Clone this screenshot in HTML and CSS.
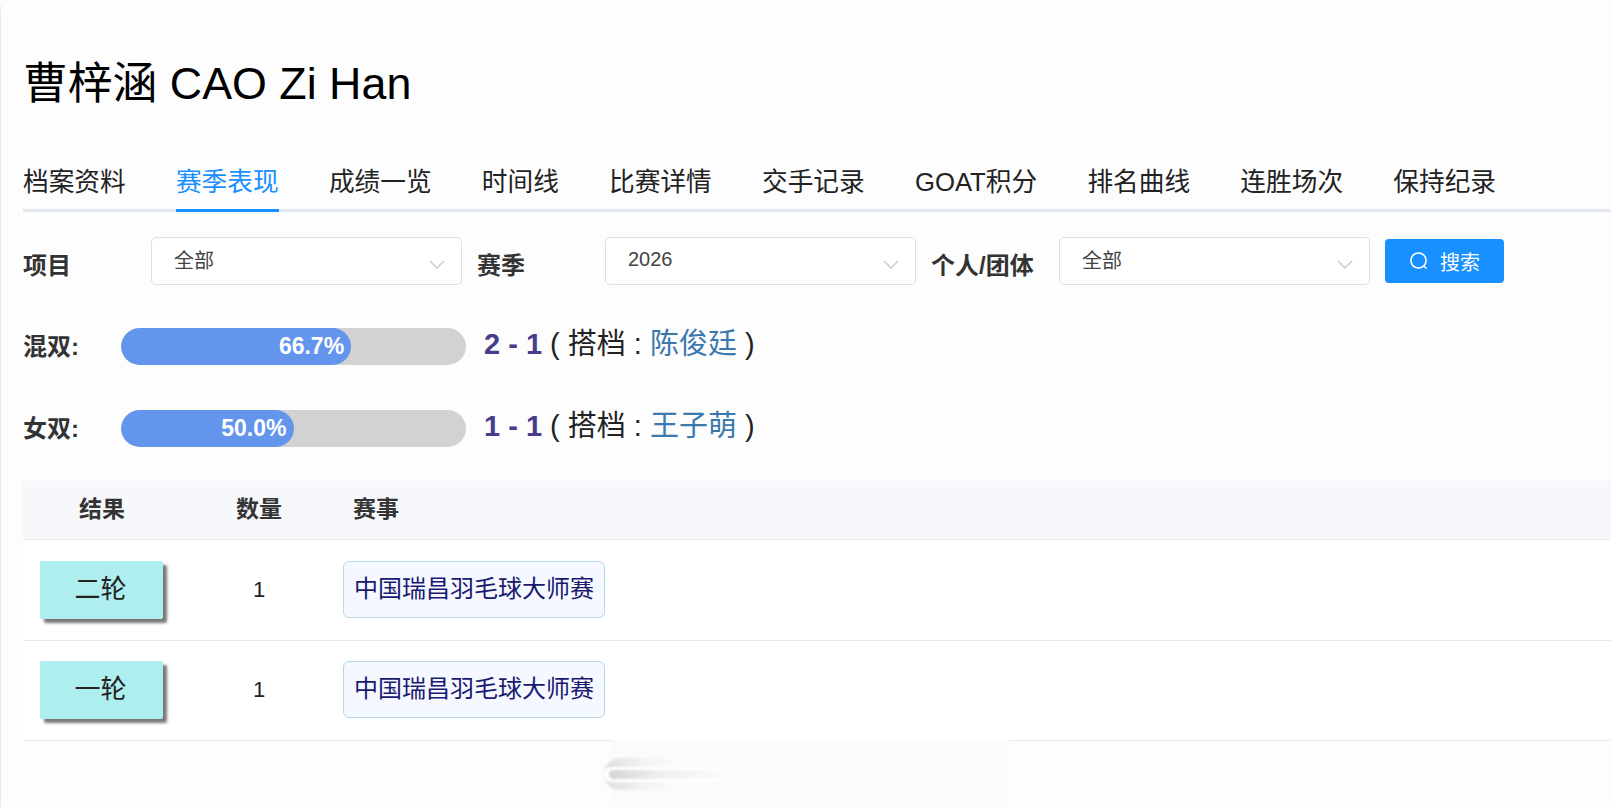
FILE: index.html
```html
<!DOCTYPE html>
<html lang="zh-CN">
<head>
<meta charset="utf-8">
<title>曹梓涵 CAO Zi Han</title>
<link rel="stylesheet" href="styles.css">
</head>
<body>
<main class="page">
  <h1 class="title">曹梓涵 CAO Zi Han</h1>
  <nav class="tabs">
    <a class="tab">档案资料</a>
    <a class="tab active">赛季表现</a>
    <a class="tab">成绩一览</a>
    <a class="tab">时间线</a>
    <a class="tab">比赛详情</a>
    <a class="tab">交手记录</a>
    <a class="tab">GOAT积分</a>
    <a class="tab">排名曲线</a>
    <a class="tab">连胜场次</a>
    <a class="tab">保持纪录</a>
  </nav>
  <form class="filters">
    <label class="filter-label">项目</label>
    <div class="select"><span>全部</span><svg class="chev" viewBox="0 0 16 9"><path d="M1 1l7 7 7-7"/></svg></div>
    <label class="filter-label">赛季</label>
    <div class="select"><span>2026</span><svg class="chev" viewBox="0 0 16 9"><path d="M1 1l7 7 7-7"/></svg></div>
    <label class="filter-label">个人/团体</label>
    <div class="select"><span>全部</span><svg class="chev" viewBox="0 0 16 9"><path d="M1 1l7 7 7-7"/></svg></div>
    <button class="search" type="button"><svg class="search-icon" viewBox="0 0 20 20"><circle cx="9.5" cy="9.5" r="7.6"/><path d="M15 15l2.5 2.5"/></svg>搜索</button>
  </form>
  <section class="stats">
    <div class="stat">
      <b class="stat-label">混双:</b>
      <div class="bar"><div class="fill" style="width:66.7%">66.7%</div></div>
      <p class="stat-text"><b class="score">2 - 1</b> ( 搭档 : <a class="partner">陈俊廷</a> )</p>
    </div>
    <div class="stat">
      <b class="stat-label">女双:</b>
      <div class="bar"><div class="fill" style="width:50%">50.0%</div></div>
      <p class="stat-text"><b class="score">1 - 1</b> ( 搭档 : <a class="partner">王子萌</a> )</p>
    </div>
  </section>
  <table class="results">
    <thead>
      <tr><th class="c1">结果</th><th class="c2">数量</th><th class="c3">赛事</th></tr>
    </thead>
    <tbody>
      <tr>
        <td class="c1"><span class="round">二轮</span></td>
        <td class="c2">1</td>
        <td class="c3"><span class="event">中国瑞昌羽毛球大师赛</span></td>
      </tr>
      <tr class="row-last">
        <td class="c1"><span class="round">一轮</span></td>
        <td class="c2">1</td>
        <td class="c3"><span class="event">中国瑞昌羽毛球大师赛</span></td>
      </tr>
    </tbody>
  </table>
  <div class="smudge"><i class="pill"></i><i class="pill-core"></i></div>
</main>
</body>
</html>
```
FILE: styles.css
```css
* { box-sizing: border-box; }
html, body { margin: 0; height: 100%; overflow: hidden; }
body {
  background: #fdfdfe;
  color: #222;
  font-family: "Liberation Sans", "Noto Sans CJK SC", sans-serif;
}
.page {
  position: relative;
  height: 807px;
  padding: 53px 0 0 22px;
  border-left: 1px solid #e8e8e8;
  border-top-left-radius: 10px;
}
.title {
  margin: 0;
  font-size: 44.8px;
  line-height: 60px;
  font-weight: 400;
  color: #000;
}
.tabs {
  display: flex;
  gap: 50.2px;
  margin-top: 45px;
  height: 54px;
  border-bottom: 3px solid #e1e8f0;
}
.tab {
  font-size: 25.7px;
  line-height: 48px;
  height: 54px;
  color: #222;
  white-space: nowrap;
}
.tab.active {
  color: #1890ff;
  border-bottom: 3px solid #1890ff;
}
.filters {
  display: flex;
  align-items: center;
  margin-top: 25px;
  height: 48px;
}
.filter-label {
  width: 128px;
  flex: none;
  font-size: 24px;
  font-weight: 700;
  color: #333;
  padding-top: 5px;
  white-space: nowrap;
}
.select {
  flex: none;
  width: 311px;
  height: 48px;
  margin-right: 15px;
  padding: 0 16px 3px 22px;
  display: flex;
  align-items: center;
  justify-content: space-between;
  background: #fff;
  border: 1px solid #dcdfe6;
  border-radius: 5px;
  font-size: 20px;
  color: #444;
}
.chev {
  width: 16px;
  height: 9px;
  margin-top: 9px;
  fill: none;
  stroke: #c4c7cc;
  stroke-width: 1.3;
}
.search {
  flex: none;
  width: 119px;
  height: 44px;
  display: flex;
  align-items: center;
  justify-content: center;
  gap: 11px;
  background: #1890ff;
  color: #fff;
  border: 0;
  border-radius: 4px;
  font: inherit;
  font-size: 20px;
}
.search-icon {
  width: 20px;
  height: 20px;
  fill: none;
  stroke: #fff;
  stroke-width: 1.5;
}
.stats { margin-top: 43px; }
.stat {
  display: flex;
  align-items: flex-start;
  height: 37px;
  margin-bottom: 45px;
}
.stat-label {
  width: 98px;
  flex: none;
  font-size: 24px;
  line-height: 37px;
  color: #333;
}
.bar {
  flex: none;
  width: 345px;
  height: 37px;
  border-radius: 19px;
  background: #d2d2d2;
  overflow: hidden;
}
.fill {
  height: 100%;
  padding-right: 7px;
  border-radius: 19px;
  background: #6495ed;
  color: #fff;
  font-size: 23px;
  font-weight: 700;
  line-height: 36px;
  text-align: right;
}
.stat-text {
  margin: 0 0 0 18px;
  font-size: 29px;
  line-height: 33px;
  white-space: nowrap;
  color: #222;
}
.score { color: #483d8b; }
.partner { color: #3a78ad; }
.results {
  width: 1588px;
  margin-top: -11px;
  border-collapse: collapse;
  table-layout: fixed;
  background: #fff;
}
.results th {
  height: 58px;
  padding: 0 0 5px;
  background: #f7f8fb;
  border-bottom: 1px solid #e6ebf0;
  font-size: 23px;
  font-weight: 700;
  color: #333;
}
.results td {
  height: 101px;
  padding: 0;
  border-bottom: 1px solid #e6ebf0;
  font-size: 22px;
  color: #222;
}
.results .row-last td { height: 100px; padding-bottom: 1px; }
.c1 { width: 158px; text-align: center; }
.c2 { width: 156px; text-align: center; }
.results .c3 { text-align: left; padding-left: 6px; }
.results th.c3 { padding-left: 16px; }
.round {
  display: block;
  width: 123px;
  height: 58px;
  margin-left: 17px;
  padding-right: 2px;
  background: #afeeee;
  border-radius: 2px;
  box-shadow: 4px 4px 3px #777;
  font-size: 26px;
  line-height: 56px;
  text-align: center;
}
.event {
  display: inline-block;
  vertical-align: middle;
  height: 57px;
  padding: 0 10px;
  background: #f5f8fe;
  border: 1px solid #b5d9ea;
  border-radius: 6px;
  color: #191970;
  font-size: 24px;
  line-height: 54px;
  white-space: nowrap;
}
.smudge {
  position: absolute;
  left: 610px;
  top: 740px;
  width: 398px;
  height: 67px;
  background: #fbfbfb;
}
.pill {
  position: absolute;
  left: -7px;
  top: 18px;
  width: 70px;
  height: 32px;
  border-radius: 16px 0 0 16px;
  background: linear-gradient(90deg, #dedede, #f2f2f2 55%, #fbfbfb);
  filter: blur(1px);
}
.pill-core {
  position: absolute;
  left: -2px;
  top: 30px;
  width: 110px;
  height: 9px;
  border-radius: 5px 0 0 5px;
  background: linear-gradient(90deg, #d4d4d4, #efefef 45%, #fbfbfb);
  box-shadow: -3px 0 0 3px #fff;
  filter: blur(1px);
}
```
